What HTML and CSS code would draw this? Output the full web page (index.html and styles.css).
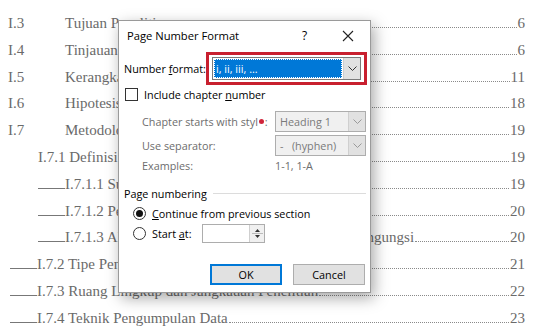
FILE: index.html
```html
<!DOCTYPE html>
<html lang="id">
<head>
    <meta charset="UTF-8">
    <title>Page Number Format</title>
    <link rel="stylesheet" href="styles.css">
</head>
<body>
    <!-- Table of contents in the document behind the dialog -->
    <div class="toc">
        <div class="row"><span class="num">I.3</span><span class="title">Tujuan Penelitian</span><span class="dots"></span><span class="page">6</span></div>
        <div class="row"><span class="num">I.4</span><span class="title">Tinjauan Pustaka</span><span class="dots"></span><span class="page">6</span></div>
        <div class="row"><span class="num">I.5</span><span class="title">Kerangka Pemikiran</span><span class="dots"></span><span class="page">11</span></div>
        <div class="row"><span class="num">I.6</span><span class="title">Hipotesis</span><span class="dots"></span><span class="page">18</span></div>
        <div class="row"><span class="num">I.7</span><span class="title">Metodologi Penelitian</span><span class="dots"></span><span class="page">19</span></div>
        <div class="row lvl2"><span class="title">I.7.1 Definisi Operasional</span><span class="dots"></span><span class="page">19</span></div>
        <div class="row lvl3"><span class="tab"></span><span class="title">I.7.1.1 Subjek Penelitian</span><span class="dots"></span><span class="page">19</span></div>
        <div class="row lvl3"><span class="tab"></span><span class="title">I.7.1.2 Perilaku Pengungsi</span><span class="dots"></span><span class="page">20</span></div>
        <div class="row lvl3"><span class="tab"></span><span class="title">I.7.1.3 Alasan Memilih Lokasi Sebagai Tempat Pengungsi</span><span class="dots"></span><span class="page">20</span></div>
        <div class="row lvl1"><span class="tab"></span><span class="title">I.7.2 Tipe Penelitian</span><span class="dots"></span><span class="page">21</span></div>
        <div class="row lvl1"><span class="tab"></span><span class="title">I.7.3 Ruang Lingkup dan Jangkauan Penelitian</span><span class="dots"></span><span class="page">22</span></div>
        <div class="row lvl1"><span class="tab"></span><span class="title">I.7.4 Teknik Pengumpulan Data</span><span class="dots"></span><span class="page">23</span></div>
    </div>

    <!-- Page Number Format dialog -->
    <div class="dialog">
        <div class="dlg-title">
            <span class="caption">Page Number Format</span>
            <span class="help">?</span>
            <svg class="close" width="12" height="12" viewBox="0 0 12 12"><path d="M1 1L11 11M11 1L1 11" stroke="#222" stroke-width="1.1"/></svg>
        </div>

        <div class="field format-row">
            <span class="label">Number <u>f</u>ormat:</span>
            <div class="highlight">
                <div class="combo active">
                    <span class="value"><span class="sel">i, ii, iii, ...</span></span>
                    <span class="arrow"><svg width="9" height="5" viewBox="0 0 9 5"><path d="M0.5 0.5L4.5 4.5L8.5 0.5" fill="none" stroke="#333"/></svg></span>
                </div>
            </div>
        </div>

        <div class="field check-row">
            <span class="checkbox"></span>
            <span>Include chapter <u>n</u>umber</span>
        </div>

        <div class="field sub-row disabled">
            <span class="sub-label">Chapter starts with styl<span class="dot"></span>:</span>
            <div class="combo">
                <span class="value">Heading 1</span>
                <span class="arrow"><svg width="9" height="5" viewBox="0 0 9 5"><path d="M0.5 0.5L4.5 4.5L8.5 0.5" fill="none" stroke="#999"/></svg></span>
            </div>
        </div>
        <div class="field sub-row disabled">
            <span class="sub-label">Use separator:</span>
            <div class="combo">
                <span class="value">-&nbsp;&nbsp;&nbsp;(hyphen)</span>
                <span class="arrow"><svg width="9" height="5" viewBox="0 0 9 5"><path d="M0.5 0.5L4.5 4.5L8.5 0.5" fill="none" stroke="#999"/></svg></span>
            </div>
        </div>
        <div class="field examples-row disabled">
            <span class="sub-label">Examples:</span>
            <span class="example">1-1, 1-A</span>
        </div>

        <div class="group-title">
            <span>Page numbering</span>
            <span class="rule"></span>
        </div>
        <div class="field radio-row">
            <span class="radio checked"></span>
            <span><u>C</u>ontinue from previous section</span>
        </div>
        <div class="field radio-row">
            <span class="radio"></span>
            <span class="start-label">Start <u>a</u>t:</span>
            <div class="spin">
                <span class="spin-input"></span>
                <span class="spin-btns">
                    <svg width="13" height="15" viewBox="0 0 13 15"><path d="M4 6L6.5 3L9 6Z" fill="#333"/><path d="M1 7.5H12" stroke="#bbb"/><path d="M4 9L6.5 12L9 9Z" fill="#333"/></svg>
                </span>
            </div>
        </div>

        <div class="buttons">
            <button class="btn btn-ok">OK</button>
            <button class="btn">Cancel</button>
        </div>
    </div>
</body>
</html>
```

FILE: styles.css
```css
body {
    margin: 0;
    background-color: #ffffff;
    overflow: hidden;
}
.toc {
    width: 517px;
    padding: 10px 0 0 8px;
    font-family: 'Liberation Serif', 'Times New Roman', serif;
    font-size: 15px;
    color: #6a6a6a;
}
.row {
    display: flex;
    align-items: baseline;
    height: 26.8px;
    line-height: 26.8px;
    white-space: nowrap;
}
.num {
    width: 57px;
    flex-shrink: 0;
}
.lvl2 {
    padding-left: 30px;
}
.lvl3 {
    padding-left: 30px;
}
.tab {
    display: inline-block;
    width: 27px;
    height: 1px;
    border-bottom: 1px solid #777;
    flex-shrink: 0;
}
.lvl1 .tab {
    margin-left: 2px;
}
.dots {
    flex: 1;
    margin: 0 1px;
    border-bottom: 1px dotted #8a8a8a;
    height: 1px;
}
.page {
    flex-shrink: 0;
}
.dialog {
    position: absolute;
    left: 118px;
    top: 20px;
    width: 251px;
    height: 271px;
    border: 1px solid #9a9a9a;
    background-color: #ffffff;
    box-shadow: 3px 5px 14px rgba(0, 0, 0, 0.35);
    font-family: 'Open Sans', 'Noto Sans', sans-serif;
    font-size: 10.8px;
    color: #000000;
    display: flex;
    flex-direction: column;
    white-space: nowrap;
}
.dlg-title {
    display: flex;
    align-items: center;
    height: 29px;
    padding-left: 8px;
    font-size: 11.2px;
}
.caption {
    flex: 1;
}
.help {
    width: 12px;
    margin-right: 28px;
    font-size: 12px;
}
.close {
    margin-right: 16px;
}
.field {
    display: flex;
    align-items: center;
}
.format-row {
    margin-top: 2px;
    height: 33px;
    padding-left: 5px;
}
.format-row .label {
    width: 82px;
}
.highlight {
    width: 155px;
    height: 27px;
    border: 3px solid #c8202f;
    display: flex;
    align-items: center;
    justify-content: center;
}
.combo {
    display: flex;
    border: 1px solid #adadad;
    background-color: #f0f0f0;
    color: #7a7a7a;
}
.combo.active {
    width: 147px;
    height: 21px;
    border-color: #7a7a7a;
    background-color: #ffffff;
    color: #ffffff;
}
.value {
    flex: 1;
    display: flex;
    align-items: center;
    padding-left: 4px;
}
.combo.active .value {
    padding: 1px;
}
.sel {
    flex: 1;
    height: 100%;
    display: flex;
    align-items: center;
    padding-left: 2px;
    background-color: #0078d7;
    outline: 1px dotted #ffffff;
    outline-offset: -1px;
}
.arrow {
    width: 16px;
    display: flex;
    align-items: center;
    justify-content: center;
    background-color: #e1e1e1;
    border-left: 1px solid #cfcfcf;
}
.check-row {
    height: 18px;
    padding-left: 6px;
}
.checkbox {
    width: 11px;
    height: 11px;
    border: 1px solid #333;
    background: #fff;
    margin-right: 6px;
}
.disabled {
    color: #6d6d6d;
}
.sub-row {
    height: 24px;
    padding-left: 23px;
}
.check-row + .sub-row {
    margin-top: 6px;
}
.sub-label {
    width: 133px;
    display: flex;
    align-items: center;
}
.dot {
    display: inline-block;
    width: 5px;
    height: 5px;
    border-radius: 50%;
    background-color: #d0243a;
    margin: 0 1px;
}
.sub-row .combo {
    width: 89px;
    height: 19px;
}
.examples-row {
    height: 16px;
    padding-left: 23px;
}
.group-title {
    display: flex;
    align-items: center;
    height: 20px;
    margin-top: 10px;
    padding-left: 5px;
    padding-right: 4px;
}
.rule {
    flex: 1;
    margin-left: 6px;
    border-top: 1px solid #dcdcdc;
}
.radio-row {
    height: 20px;
    padding-left: 14px;
}
.radio {
    width: 11px;
    height: 11px;
    border: 1px solid #333;
    border-radius: 50%;
    margin-right: 6px;
    display: flex;
    align-items: center;
    justify-content: center;
}
.radio.checked::after {
    content: '';
    width: 7px;
    height: 7px;
    border-radius: 50%;
    background-color: #111;
}
.start-label {
    width: 50px;
}
.spin {
    display: flex;
    height: 17px;
    border: 1px solid #adadad;
}
.spin-input {
    width: 46px;
    background: #fff;
}
.spin-btns {
    width: 14px;
    display: flex;
    align-items: center;
    justify-content: center;
    background-color: #f0f0f0;
    border-left: 1px solid #cfcfcf;
}
.buttons {
    display: flex;
    gap: 11px;
    margin-top: 21px;
    padding-left: 91px;
}
.btn {
    width: 72px;
    height: 21px;
    border: 1px solid #adadad;
    background-color: #e1e1e1;
    font-family: 'Open Sans', 'Noto Sans', sans-serif;
    font-size: 10.8px;
    color: #000;
    padding: 0;
}
.btn-ok {
    border: 2px solid #0078d7;
}
```
